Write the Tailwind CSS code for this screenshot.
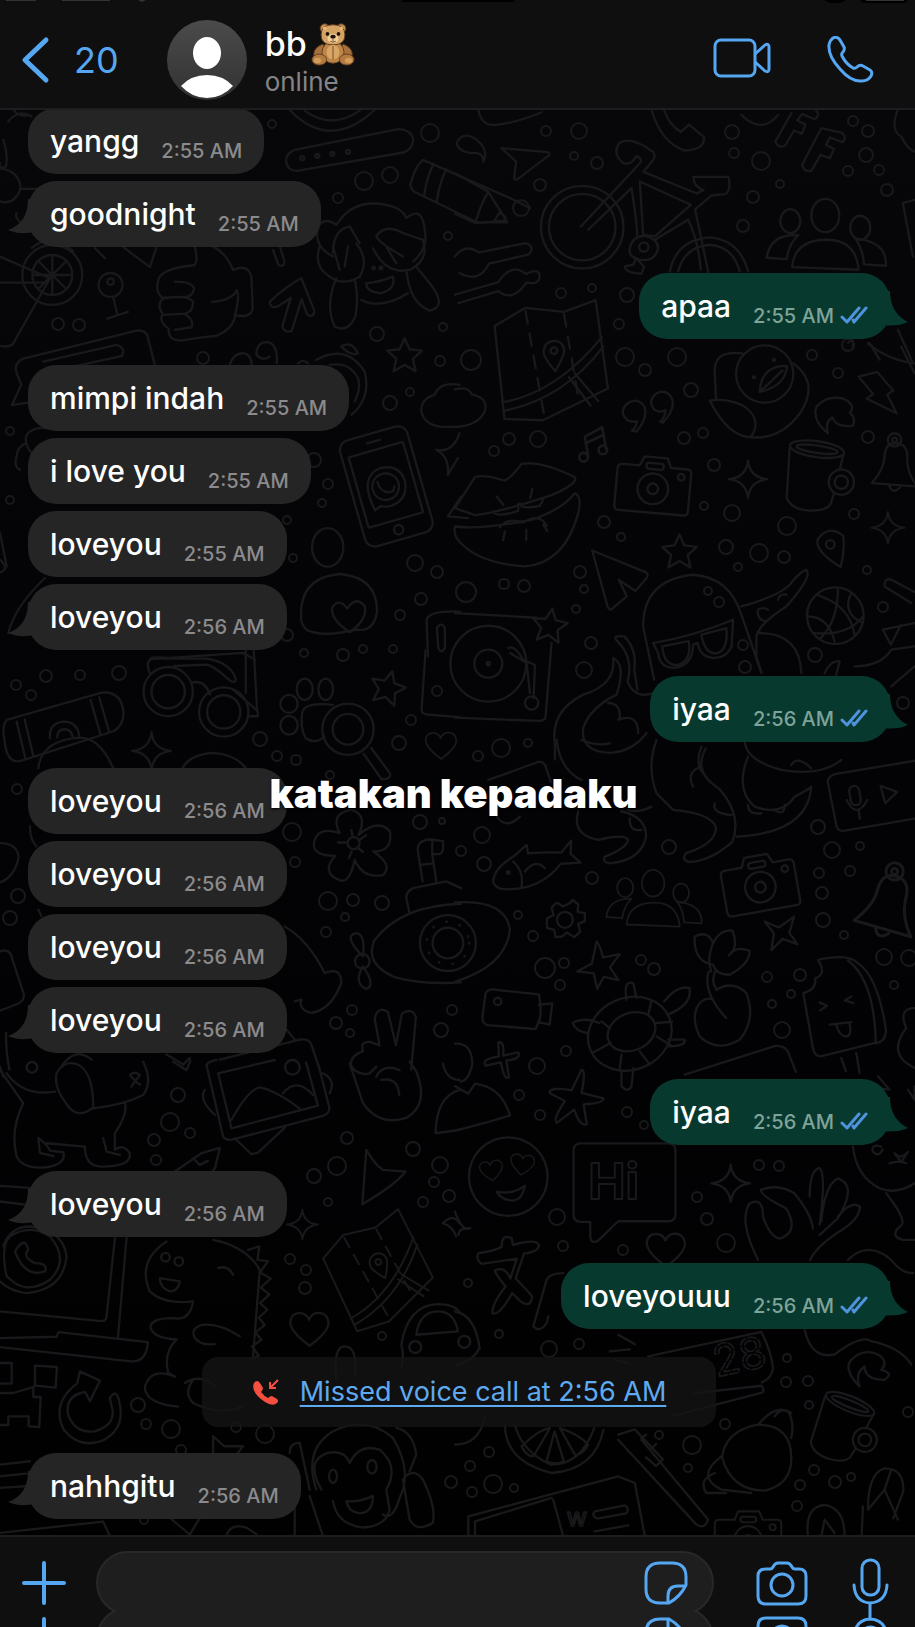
<!DOCTYPE html>
<html lang="id">
<head>
    <meta charset="UTF-8">
    <meta name="viewport" content="width=device-width, initial-scale=1.0">
    <title>bb - Chat</title>
    <script src="https://cdn.jsdelivr.net/npm/@tailwindcss/browser@4"></script>
</head>
<body class="bg-black font-['Inter','Liberation_Sans',sans-serif] text-white">
    <div class="relative flex h-screen flex-col overflow-hidden">

        <!-- Header -->
        <header class="relative flex h-[110px] shrink-0 items-center border-b-2 border-[#1d1c1e] bg-[#100f10] pt-3 pr-10 pl-5">
            <!-- bottom edge of the status bar -->
            <svg class="absolute inset-x-0 top-0 h-1 w-full" viewBox="0 0 915 4" preserveAspectRatio="none" fill="#000" aria-hidden="true">
                <path d="M402 0h112v2H402zM824 0h22l-6 3h-10zM860 0h48l-3 3h-42z"/>
                <path fill="#333" d="M6 0h30v1H6zM62 0h48v1H62zM138 0h8l-4 2zM866 0h38v1h-38z"/>
            </svg>
            <a href="#" class="flex items-center gap-[22px] text-[#55a7f2]" aria-label="Back, 20 unread chats">
                <svg class="h-12 w-8" viewBox="0 0 32 48" fill="none" stroke="currentColor" stroke-width="5" stroke-linecap="round" stroke-linejoin="round" aria-hidden="true">
                    <path d="M26 4 5 24l21 20"/>
                </svg>
                <span class="text-[36px] leading-12">20</span>
            </a>
            <svg class="ml-12 size-20 shrink-0" viewBox="0 0 80 80" role="img" aria-label="Profile photo">
                <defs>
                    <linearGradient id="avatar" x2="0" y2="1"><stop stop-color="#4b4b4b"/><stop offset="1" stop-color="#323232"/></linearGradient>
                </defs>
                <circle cx="40" cy="40" r="40" fill="url(#avatar)"/>
                <ellipse cx="40" cy="33" rx="14" ry="16" fill="#fff"/>
                <path d="M14 66Q24 55 40 55t26 11Q55 78 40 78T14 66z" fill="#fff"/>
            </svg>
            <div class="ml-[18px] flex flex-col">
                <div class="flex items-center gap-1">
                    <h1 class="text-[34px] leading-10 font-medium">bb</h1>
                    <svg class="size-11" viewBox="0 0 48 48" role="img" aria-label="Teddy bear">
                        <g stroke="#5e3b1c" stroke-width="1">
                            <path fill="#a6713c" d="M13 24Q3 28 3 35q0 5 6 3l7-6z"/>
                            <path fill="#a6713c" d="M35 24q10 4 10 11 0 5-6 3l-7-6z"/>
                            <ellipse cx="24" cy="33" rx="12" ry="12" fill="#bd8648"/>
                            <circle cx="15" cy="7" r="5" fill="#c08a4d"/><circle cx="33" cy="7" r="5" fill="#c08a4d"/>
                            <path fill="#d4a364" d="M24 3q13 0 13 11t-13 11-13-11T24 3z"/>
                            <ellipse cx="9" cy="41" rx="8" ry="6" fill="#b47b40"/><ellipse cx="39" cy="41" rx="8" ry="6" fill="#b47b40"/>
                        </g>
                        <circle cx="15" cy="7" r="2" fill="#e4b878"/><circle cx="33" cy="7" r="2" fill="#e4b878"/>
                        <ellipse cx="24" cy="33" rx="7" ry="8" fill="#d8a765"/>
                        <ellipse cx="7" cy="42" rx="4" ry="3" fill="#d29c5c"/><ellipse cx="41" cy="42" rx="4" ry="3" fill="#d29c5c"/>
                        <ellipse cx="24" cy="18" rx="6" ry="5" fill="#f1d09b"/>
                        <ellipse cx="24" cy="16" rx="3" ry="2" fill="#1e120b"/>
                        <circle cx="18" cy="13" r="2" fill="#1e120b"/><circle cx="30" cy="13" r="2" fill="#1e120b"/>
                        <path d="M24 18v3m-3 0q3 2 6 0M24 26v15" fill="none" stroke="#6b4523" stroke-width="1"/>
                    </svg>
                </div>
                <p class="text-[26px] leading-8 text-[#858587]">online</p>
            </div>
            <div class="ml-auto flex items-center gap-14 text-[#55a7f2]">
                <button type="button" aria-label="Video call">
                    <svg class="h-12 w-15" viewBox="0 0 60 48" fill="none" stroke="currentColor" stroke-width="3" stroke-linejoin="round">
                        <rect x="4" y="4" width="40" height="36" rx="6"/>
                        <path d="M44 18 54 9q4-2 4 2v22q0 4-4 2l-10-9"/>
                    </svg>
                </button>
                <button type="button" aria-label="Voice call">
                    <svg class="size-12" viewBox="0 0 48 48" fill="none" stroke="currentColor" stroke-width="3" stroke-linecap="round" stroke-linejoin="round">
                        <path d="M6 2q4-2 7 2l4 7q1 2-1 5-2 2-1 4 4 8 11 12 2 1 4-1 3-3 6-1l7 4q3 2 1 6-3 5-9 5Q24 46 13 33 1 20 2 9q1-5 4-7z"/>
                    </svg>
                </button>
            </div>
        </header>

        <!-- Messages -->
        <main class="relative flex min-h-0 flex-1 flex-col justify-end overflow-hidden bg-linear-to-b from-[#070609] to-[#010102]">
            <!-- Doodle wallpaper -->
            <svg class="absolute inset-0 h-full w-full" viewBox="0 110 915 1425" preserveAspectRatio="xMidYMin slice" fill="none" stroke="#19191b" stroke-width="7" stroke-linecap="round" stroke-linejoin="round" aria-hidden="true">
                <defs>
                    <path id="star" d="M0-50 15-17l37 4-27 25 8 37L0 30l-33 19 8-37-27-25 37-4z"/>
                    <path id="spark" d="M0-56Q5-6 58 0 6 6 0 56-6 6-58 0-5-6 0-56z"/>
                    <path id="heart" d="M0 50Q-62 5-58-24c5-30 45-32 56-4 12-30 53-26 58 4Q62 5 0 50z"/>
                    <g id="camera">
                        <path d="M-95-55h50l12-28h70l12 28h50q12 0 12 14V70q0 14-14 14H-97q-14 0-14-14V-41q0-14 16-14z"/>
                        <circle r="46" cy="12"/><circle r="16" cy="12"/><circle cx="82" cy="-30" r="10"/><rect x="-25" y="-65" width="52" height="18" rx="8"/>
                    </g>
                    <g id="people">
                        <ellipse cy="-95" rx="42" ry="50"/><ellipse cx="-105" cy="-78" rx="30" ry="36"/><ellipse cx="105" cy="-58" rx="30" ry="36"/>
                        <path d="M-100 60Q-92-20 0-22T100 68zM-116 36l-60-4q10-72 95-68-28 24-35 72zM116 52l66 4q4-72-92-82 24 34 26 78z"/>
                    </g>
                    <g id="map">
                        <path d="M-155-80-60-130 55-112 152-142 175 125-25 210-140 200z"/>
                        <path d="M-60-120-20 200M55-105 85 150" stroke-dasharray="38 30"/>
                        <path d="M-144 150Q20 130 165-30M-142 176Q40 150 168-2M60 85l60 88M78 75l66 86"/>
                        <path d="M20 65Q-15 20-12 2c4-38 60-38 62 0Q50 20 20 65z"/><circle cx="19" cy="3" r="10"/>
                    </g>
                    <g id="bell">
                        <circle cy="-75" r="20"/><circle cy="-75" r="7"/><path d="M-68 55Q-30 10-30-25q2-40 32-40 40 0 36 50 0 40 30 80zM-16 62q10 28 32 6"/>
                    </g>
                    <g id="mug">
                        <ellipse cx="0" cy="-88" rx="82" ry="24"/><ellipse cx="0" cy="-88" rx="62" ry="11"/>
                        <path d="M-82-80-70 70q20 32 72 28 55-6 62-32l5-30M76-40l5-44"/><circle cx="86" r="38"/><circle cx="86" r="20"/>
                    </g>
                </defs>

                <g transform="scale(.333)">
                    <path d="M870 330q120 125 255 0M915 332q80 60 165 0M25 365q30-40 70-15M40 330q20 25 50 15"/>
                    <path d="M885 450l310-62q40 0 46 32-4 30-30 38l-320 55q-30-2-32-30 0-22 26-33z"/>
                    <circle cx="908" cy="475" r="6"/><circle cx="953" cy="468" r="6"/><circle cx="998" cy="462" r="6"/><circle cx="1045" cy="456" r="6"/>
                    <path d="M1270 480l262 115 60 30M1270 480q-24 20-38 76 4 14 12 20l190 92h90M1302 492q-20 40-28 92M1340 508q-20 40-28 94"/>
                    <path d="M10 420q15 40 8 80-24 10-18-10M0 505q60 10 62 62-20 50-62 38M60 567h60M50 640q-10 15 30 40"/>
                    <path d="M1000 770q-60-30-45-90 20-30 55-5 50-80 150-60 50 10 60 40 50-40 56 40 10 50-35 90M1000 760q0-70 50-80l30 50M1210 770q-70-40-80-60 25-40 80-10l60 20"/>
                    <path d="M95 745q60-50 125 10M285 745l30 30M370 742l80 60 20-60"/>
                </g>

                <g transform="translate(455 0) scale(.333)">
                    <path d="M70 330q10 50 50 45 60-5 140-38M5 430q20-40 60-10 38 30 20 65 0-30-35-25-40-5-45-30zM140 445l140 12q10 5-5 15L188 538q-12 6-10-10l6-42z"/>
                    <path d="M0 520l100 56 54 86-92 8-62-28M100 576q-20 30-38 90M118 664l16-26 18 14"/>
                    <circle cx="382" cy="682" r="124"/><circle cx="382" cy="682" r="100"/>
                    <path d="M378 680 555 490q10-12-10-22-15 30-40 22-35-30-10-62 35-20 100 28 10 14-4 30l-25 30 160 65 20-10q-30-10-30-40h105q10 40-10 52l-40 4-50 42 40 190M400 690 530 565q15 90 18 150M555 545l10 160 35 5 108-95zM600 720l100-60q30 60 38 150"/>
                    <path d="M525 745q10-40 48-36 40 10 36 40-10 40-60 30-30-10-24-34zM545 775l-10 20-25 5q0 18 50 22l8-20z"/><circle cx="567" cy="742" r="14"/>
                    <path d="M645 815q20-95 120-102 90 8 115 102M670 815q20-75 95-80 70 5 90 80"/>
                    <path d="M590 330q30 100 100 122 60-2 58-40l-45-38-25 22q-35-20-50-66M860 345q60 60 110 0"/>
                    <path d="M1010 340 962 425q8 22 30 12l26-45 24 10 10-28-24-12 14-20 38 16q18-12 4-28M1100 385l-58 110q6 22 28 18l28-48 28 10 12-28-24-12 12-22 38 14q14-14-2-28z"/>
                    <use href="#people" x="1112" y="742"/>
                    <path d="M0 770q30-40 72-12l140-28q30 10 10 34l-120 28q-30 60-88 28M0 885l130-38q40-60 84-24 42-22 40 12-4 20-40 14-40 60-84 25L10 910"/>
                    <path d="M1330 330q-25 60 10 80 20 40 40 45M1345 610l35-10M1345 610l30 160"/>
                    <path d="M1180 1030q20-20 14 12M1245 1030l30 50M1330 990l45 100"/>
                </g>

                <g transform="translate(0 240) scale(.333)">
                    <circle cx="157" cy="105" r="90"/><circle cx="157" cy="105" r="60"/>
                    <path d="M157 50v110M102 105h110M118 66l78 78M118 144l78-78M0 50l150 65-110 195q-10 14-40 8M0 128h130"/>
                    <circle cx="332" cy="135" r="36"/><circle cx="332" cy="125" r="10"/><path d="M340 172l12 50M322 236l62-20"/>
                    <path d="M585 20q10 40 0 55-95 10-108 40-14 40 12 60-20 20 0 48-14 20 18 44-4 35 38 35 60-10 104-14 50-20 58-62 50 10 52-24l-4-92q-10-40-55-20-20-50-60-70M525 125q50 0 58 20-4 30-40 26l-55 2M490 175q80-10 90 12 0 30-25 34l-60 4M555 222q30 20 20 40l-50 8M636 186q60-4 75-35 10 20-6 75"/>
                    <path d="M905 115q-40 20-95 70 0 22 25 14l38-25-25 85q5 22 28 14l30-95 16 45q20 14 22-10zM820 30l16 45q20 8 18-12l-14-45"/>
                    <path d="M960 20q-20 60 30 90 40 30 90 0 30-50-10-100M1000 20l20 70M1045 20l-10 60M1120 25q40 80 110 65 60-30 40-90M1160 20l30 50M1010 115q-35 80-5 145 40 20 62-30 10-50 0-105M1220 90q10 100 70 122 50-10 10-70l-50-62M1085 180q60 30 140-20M1100 130q40-4 80-20 10 40-40 50-40-5-40-30z"/><circle cx="1122" cy="84" r="4"/><circle cx="1144" cy="84" r="4"/>
                    <path d="M50 400q-10-30 20-44l340-84q30-2 34 20l20 80M130 365l220-50q30 10 15 34l-160 34M50 400l14 34-28 62 60-10"/>
                    <path d="M690 375q10-35 40-35 25 4 26 34M770 345q0-40 35-38 30 8 26 62M770 345q20 20 40 5M895 370q15-14 30 0M950 360q90-50 145 35 20 80-40 130M990 375q60-10 85 40 10 30-10 70M1025 320q30-20 50 20-20 10-50-20z"/>
                    <use href="#star" x="1215" y="345"/>
                    <path d="M1380 435q-60-10-75 30-40 10-40 50 10 40 60 46h55M80 585q20-25 60-20M80 585q-10 30 20 60M50 650q0-30 30-40M60 690q-20-10-10-40"/>
                    <g transform="rotate(-16 1160 740)"><rect x="1055" y="575" width="210" height="330" rx="30"/><rect x="1075" y="625" width="170" height="220" rx="4"/><circle cx="1160" cy="875" r="14"/><path d="M1140 600h40"/><path d="M1108 800q-22-110 50-118 60 4 60 60-6 54-60 58-18 0-30-8z"/><circle cx="1158" cy="740" r="40"/><path d="M1138 720q0 40 38 40l8-14"/></g>
                    <path d="M1310 630q50 10 70-50M1310 630q40 20 35 75l30-50M1345 830l40-60M1345 830l60 5"/>
                    <ellipse cx="984" cy="923" rx="47" ry="58"/>
                    <path d="M905 1145q-12-130 115-142 115 10 112 115-10 60-60 52-90 20-130 8-30-4-37-33zM1050 1178q-60-40-52-75 20-30 45 4 25-40 52-8 10 40-45 79z"/>
                    <path d="M25 1180q20-80 110-165M1285 1250l-4-110q10-28 100-24M1312 1165q14-20 24 0v60q-12 20-20 0z"/>
                    <path d="M450 1260q0-10 60-5l220-15 35 20M0 880l20 100M0 960q30 30 0 38"/>
                </g>

                <g transform="translate(455 340) scale(.333)">
                    <use href="#map" transform="translate(278 30) rotate(-3)"/>
                    <path d="M0 148q40-10 50 15 50 10 40 50-20 45-90 48"/>
                    <circle cx="930" cy="102" r="86"/><circle cx="898" cy="112" r="3"/><circle cx="958" cy="60" r="3"/>
                    <path d="M915 156q5-80 82-78-4 60-82 78zM915 156l68-64M862 40q-85-10-82 55l4 85M1016 70q80 60 20 150-60 80-145 72-70 0-126-110 50-8 100 15 60 40 24 94"/>
                    <path d="M545 275q35-40 24-75-20-30-50-10-30 25 0 52 20 6 28 2-4 20-16 28zM625 248q35-40 28-68-15-35-48-20-30 25-5 50 20 10 32 0 0 20-16 36zM1120 280q-50-40-34-80 30-35 80-24 40 20 20 42 20 20 8 40-50 5-60-25-24 10-14 47zM1212 110l56-14 48 56-18 12 28 56-90-44 20-14z"/>
                    <g stroke-width="8"><path d="M400 350 390 290l52-28 12 66M392 310l52-24"/><circle cx="386" cy="352" r="13"/><circle cx="444" cy="330" r="13"/></g>
                    <path d="M0 505 60 412q20-10 90 10 20-10 50-50 60-10 160 40 10 20-70 54-150 50-230 60zM0 560q80 10 230-20 90-30 130-80 22 10 10 60-40 150-160 160Q60 670 5 595-5 575 0 560zM115 515q10 20 75-2v-20M195 490q0 20 60 8l10-20M135 562q20-30 70-14 50-30 70 10M150 575l-6 26M214 570v30M265 555l12 18M125 470l20 25M232 448l-6 26"/>
                    <use href="#camera" transform="translate(595 435) rotate(5)"/>
                    <use href="#spark" x="880" y="418"/><use href="#spark" transform="translate(1300 564) scale(.85)"/>
                    <use href="#mug" transform="translate(1075 415) rotate(8)"/><use href="#bell" transform="translate(1320 375)"/>
                    <use href="#star" x="674" y="634"/><use href="#star" transform="translate(285 856) rotate(8)"/>
                    <path d="M412 632l162 66q8 6 2 16l-34 40-50-34 24 50-48 40q-6 0-10-10zM1158 682q-80-50-68-84 30-45 76-10 5 50-8 94z"/><circle cx="1127" cy="614" r="13"/>
                    <circle cx="1142" cy="828" r="85"/><path d="M1085 765q100 30 115 120M1150 745q0 100-52 150M1060 830q60 0 80 75M1080 880q100 10 145-50M1190 760q-30 60 35 90"/>
                    <path d="M598 1020 565 860q0-140 150-155 110 8 145 120l60 175M860 800q110-30 145-65 30-40 50-45 20 20-60 110-80 50-90 90v60l16 50M915 880q120 0 125 120M970 780q5-20 25-15M935 845q-30-5-25-35 15-10 30 0"/>
                    <path d="M595 910q120-20 240-70l-4 80q-20 40-60 34-36-4-42-44l-14 4q0 60-50 70-50 4-55-44zM622 920l80-16q10 60-34 72-40 2-46-56zM740 885l75-20q6 70-32 76-34 0-43-56z"/>
                    <path d="M0 820l245 14M290 910l-18 220q0 14-20 14L0 1134"/><circle cx="100" cy="972" r="114"/><circle cx="100" cy="972" r="42"/><circle cx="100" cy="972" r="5"/><path d="M160 925q20-10 44 35l36 16-4 100M165 940l50 30 10 90"/><circle cx="230" cy="1090" r="20"/>
                    <path d="M600 1060q-60 20-82-35 20-70-30-120-20-20 20-15 40 40 30 100l10 60M475 955q10 80-90 110-100 50-85 150v45M475 955q40 20 10 110-80 40-100 100-10 70 80 75 70-5 110-60M460 1090q40 0 34 50M490 1140q60-20 60 40"/>
                    <path d="M1290 740q0-30 25-18l65 35M1290 740l80 50M1285 870l95-20M1285 870l24 45 30-60M1200 980q80 0 110-50l70-10M1310 1040l70-60M1110 1000q20-40 45-35l-10 40"/>
                    <path d="M1240 10q60 50 140 60M1340 20l40 80"/>
                </g>

                <g transform="translate(0 650) scale(.333)">
                    <path d="M20 210l285-82q60-5 66 60 0 40-30 56L60 334q-40 6-46-60-10-46 6-64zM50 215l26 110M74 208l26 110M272 150l30 105M298 142l30 105M150 265q-4-45 40-50 44 0 48 45M172 262q0-24 22-24 22 2 24 22"/>
                    <path d="M115 355q10-85 125-92 60 0 100 92"/>
                    <circle cx="505" cy="125" r="74"/><circle cx="505" cy="125" r="50"/><circle cx="672" cy="186" r="74"/><circle cx="672" cy="186" r="50"/>
                    <path d="M450 70q-16-40 10-44l160 0q70 10 88 60 0 20-25 0-30-30-60-42l-100 4M575 98q40-10 55 35M700 120q60 50 74 65v14h-30M738 0v130M762 0l10 180"/>
                    <use href="#spark" x="455" y="303"/><path d="M548 355q20-40 90-46 70 4 100 46"/>
                    <ellipse cx="915" cy="118" rx="24" ry="32"/><ellipse cx="978" cy="118" rx="22" ry="32"/><ellipse cx="868" cy="162" rx="26" ry="27"/><ellipse cx="868" cy="226" rx="26" ry="28"/><path d="M1000 165q-80-10-92 20-8 50 10 80 30 20 56-6"/>
                    <circle cx="1045" cy="238" r="77"/><circle cx="1045" cy="238" r="46"/><path d="M1115 295l56 75q4 20-25 18l-54-76"/>
                    <use href="#star" transform="translate(1165 112) rotate(15)"/><use href="#heart" transform="translate(1325 287) scale(.8)"/>
                    <path d="M1278 0l-12 180q0 14 24 14l90 8"/>
                    <path d="M1020 550q-30-60 35-70 50 14 22 75 60-50 94-10 10 60-50 60 60 40 30 70-60 14-86-45-14 70-44 62-60-24-14-74-70 0-64-40 10-50 77-28z"/><circle cx="1062" cy="580" r="18"/><path d="M1015 578h28M1055 540l4 20M1100 556l-20 14M1090 606l-16-12M1048 625l8-20"/>
                    <path d="M1255 605q-5-35 40-36l35 5q4 34-8 38l-24 2 12 80M1255 605l14 90M1262 645l40-4M1298 572v40M1220 745q0-20 20-30l100-20 45 20M1220 745l10 45"/>
                    <path d="M1384 762q-180 5-260 110-30 70 60 110 90 24 200 16"/>
                    <circle cx="1345" cy="880" r="84"/><circle cx="1345" cy="880" r="46"/><circle cx="1345" cy="880" r="64" stroke-dasharray="2 40"/>
                    <path d="M1090 920q-60-60-22-70 30 0 22 70zM1090 950q-30 50 10 68 30-10-10-68z"/><circle cx="1088" cy="935" r="22"/>
                    <path d="M0 580q50 0 56 40-10 60-56 78M0 905q30-10 36 20l36 110q0 20-20 28l-52 20M115 780l10 20M90 530q0 40 20 60M855 830q70 40 120 140 50-20 50 30-30 80-90 90-40-10-30-40l-20 5M860 1140l25 30"/>
                    <path d="M1055 1260q-10-40 35-55-10-30 20-28l30 10-15-80q10-40 40-20l24 100 18-95q30-20 42 10l-14 158"/>
                    <path d="M18 1150q0 60 10 110M660 1230l240-60q30-5 36 18l24 72M185 1250q40-60 90-20M500 1215l50 30 20-20"/>
                </g>

                <g transform="translate(455 740) scale(.333)">
                    <path d="M305 0q10 90 75 120M380 0q50 20 85 10M100 120l150-54q20-2 24 20l14 40M125 230q30 40 70 0"/>
                    <path d="M605 0q-30 80 0 160l50 50q110 10 128 50 5 50-90 80-14 20 10 26 60 0 130-60 30-80-40-160-80-50-40-120M370 215q-20 70 60 85 80-20 90 0-5 25-70 50-10 20 20 20 90-10 104-80 0-60-75-76M590 200q-40 20-70 10M870 0q0 60 110 90 120 20 180-30M880 50q-40 100 20 150 80 30 120-30 40-20 50-30-10 140-225 150M740 20q-20 50 5 80"/>
                    <path d="M715 140q-20-40 15-56M780 190q-10 30 50 35M880 195q0 30 40 25M960 210q30 20 30-15M525 235q-4 40 35 35M1010 75q20-30 60 10"/>
                    <path d="M1120 130q-4-20 24-28l240-40M1120 130l26 130q4 16 24 12l210-36"/><rect x="1186" y="138" width="30" height="58" rx="15" transform="rotate(-10 1200 166)"/><path d="M1176 180q30 60 62 0M1212 210l4 26M1278 138l50 18-36 34z"/>
                    <path d="M115 430q-4-40 60-80l40-35 4 25q60-4 100-2l30-36-2 40 30 26-60 4q-60 80-170 76-20 0-32-18zM175 365q34 30 24 80M210 395q30-40 60-10"/><circle cx="160" cy="398" r="4"/>
                    <circle cx="330" cy="540" r="24"/><path d="M310 490l14 10 20-10 10-10 16 14-2 22 22 4v24l-20 8 6 24-18 16-22-14-14 12-20 2-4-22-22-6 0-28 20-10-6-22 12-14z"/>
                    <use href="#people" transform="translate(595 506) scale(.8)"/><use href="#camera" transform="translate(915 430) rotate(-10)"/><use href="#bell" transform="translate(1300 490) rotate(12) scale(1.3)"/>
                    <path d="M930 545l42 18 46-32-14 48 24 34-44-16-34 34 8-50z"/>
                    <path d="M0 488q150-10 165 80-10 110-165 158"/>
                    <path d="M425 605q10 10 20 48l50-10-30 40 26 38-44-10-20 36-10-46-50-6 44-24zM92 760q10-14 30-10l130 14q10 60 0 80l-10 24-145-12q-18-6-14-30zM252 795l40-4-8 64-34-8"/><circle cx="128" cy="785" r="11"/>
                    <path d="M720 590q40-20 55 20 20-40 58-38 20 50-10 75 20-30 62-14 0 40-60 72-40 0-50-30-60-10-55-85zM775 610q-20 50-5 85M762 695q-20 60 52 140M785 690q-20 30 0 60 50-30 90 10 30 80-20 140-70 40-120-10-30-60 0-100 20-20 40-10"/>
                    <path d="M0 912q50-4 52 60-10 50-35 54M0 1040l40 22 20-30q80 10 105 95-60 20-165 46M130 908q20-4 14 40l46-10q10 20-36 24l8 50q-14 14-24-44l-46 10q-14-20 40-28zM380 990q14 0 0 70l66 16q0 16-60 18l10 60q-20 10-38-44l-52 40q-14-10 24-66l-46-24q0-20 66-8z"/>
                    <ellipse cx="525" cy="882" rx="128" ry="108" transform="rotate(-22 525 882)"/><ellipse cx="530" cy="876" rx="74" ry="56" transform="rotate(-22 530 876)"/>
                    <path d="M515 780q-10-60 20-50l10 44M628 785q40-50 76-40 10 50-66 80M400 880q-40-5-46-30 30-20 80 0M640 900l50 0q4 20-52 20M500 995v45q20 20 30 0l6-55M440 845l25 20M412 940l55-30M500 945l-5 40M555 935l30 40M605 890l45 28M600 850l52-4M580 825l10-42"/>
                    <path d="M1090 660q90-20 120 10 60 40 84 200 0 40-36 40l-160 40q-20 0-24-30l-28-160q40-10 36-45 36-10 8-55zM1180 662q80 60 84 250M1160 955l14 40M1205 940l10 60M1095 788l22 10-20 14M1190 770l-20 12 26 8M1125 855l65-8M1145 855q10 40 36 34 10-10 4-38"/>
                    <path d="M690 1005l270-86q36-4 44 28l20 50M1380 805q-50 0-25 60-60 80 25 120M1360 1050l20 30v-40M1270 1010l35 40-20-2"/>
                </g>

                <g transform="translate(0 1060) scale(.333)">
                    <path d="M0 30l70 100q-40 80-20 160 20 40 90 32 60-10 50-45l-40-5q-10-20-35-38l5 45 40 10M140 250l115 10q0 60 50 60 90 0 85-40-20-30-45-10v-50q40-60 30-90M310 235l10 40 40 10M170 40q20-40 60-28 50 20 50 130-50 40-80-10-40-50-30-92zM280 145q90-10 150-40 30-40 0-100M20 40q50 70 145 55M0 20l10 30"/><circle cx="96" cy="22" r="16"/><path d="M390 45q14-14 30 0l-14 18zM405 64l-10 16M405 64l16 10"/>
                    <path d="M620 15q5-10 30-15M620 15l50 215q10 14 30 8l270-70q24-10 18-30L955 10M655 40l40 165 260-68-36-130M655 40l170-40M695 180q50-90 85-98 50 10 120 64M850 100q40-50 90 5M615 90q-20 30 30 75M970 40q40 20 20 60M705 235l50 48 20-5 80-75"/><circle cx="878" cy="22" r="22"/>
                    <path d="M520 5l40 26 12-30M525 335l80-55 55-16-14 60-12 15M580 295l20 20 24-12"/>
                    <path d="M1050 10l40 120q50 70 130 44 70-40 30-140l-20-30M1050 10q20 40 60 30l20-20M1130 50q20-40 70-20M1145 60q50-10 54 45M1380 90q-70 20-72 130l72-10M1330 10q10 50 50 50"/>
                    <path d="M1100 270q30 50 50 60l68 5q-30 40-130 98zM1380 490q-20-30-50 0 30 10 40 40"/>
                    <use href="#spark" transform="translate(908 494) scale(.8)"/>
                    <use href="#map" transform="translate(1120 610) rotate(-22) scale(.86)"/>
                    <use href="#heart" x="930" y="808"/>
                    <path d="M0 378l90 6M0 425l82 10M345 535 320 770q0 14-16 14L0 755M380 535l-26 300M0 835l170-4 6-14 268 30q-4 60-50 58L0 862"/>
                    <path d="M10 560q20-60 80-60 100 10 110 90-10 100-120 110-50-5-80-35M20 650q-20-90 10-120 60-40 120 0 60 70 0 130-60 40-105 10zM45 575q30-50 40-5-20 20 20 40 40 0 30 25-60 20-90-60z"/>
                    <path d="M500 545q-90 60-50 150 40 40 130 30-10 60-60 50-70 0-68 30 10 30 78 34-40 40-25 100l20 12q-70-30-90 30 0 50 100 60M580 960q-30 40 0 70 80 40 150 10M555 970q50-30 90 10M640 540q100 20 140 90l-20 260M720 830q-60-40-110-35-40 10-25 40 20 24 60 18M480 655l60 10q-6 30-30 30-30-10-30-40zM655 625q30-10 45 20"/><circle cx="497" cy="592" r="13"/><circle cx="537" cy="605" r="13"/>
                    <path d="M745 570l34-10-6 40 32 4-24 34 32 18-30 28 26 20-28 26 22 20-26 24 18 22-28 22 18 22-28 20 20 28-22 10"/>
                    <path d="M0 910h35v62H0M105 918l66 4-4 62-62-6zM0 1000h40l60-18v30h22l-4 90-32-2v-30H25v26H0M240 935l60 28-30 62-14-28q-60 10-52 66 20 60 80 52 70-20 50-80l-4-20q20-30 28 10 20 80-46 116-70 30-120-30-40-80 40-140z"/>
                    <path d="M1205 855q20-120 110-122 50 0 65 25M1250 825q10-70 65-70 50 0 60 60zM1205 855q10 30 0 70M1010 960q-10-100 25-100 40 0 30 90"/><circle cx="1247" cy="862" r="18"/>
                    <path d="M640 1130l34 30 56 0-24 30M640 1130l0 60M0 1215l90-10M0 1250l80-8M0 1285l76-5"/>
                    <path d="M950 1290q-40-120 50-175 100-50 180 20 60 100 20 180-20 70-50 50M965 1290q-50-90 20-110 50-10 65 30 30-60 90-40 60 50 20 120l10 60q-10 50-80 54-80-10-90-80M870 1180q0-30 30-30l30 140M1190 1105q50 10 60 80l-20 50M1040 1325q40 4 80-16 0 50-40 52-34-4-40-36zM1210 1260q30-40 60 0 40 80 30 130-50 30-70-10z"/><ellipse cx="1000" cy="1250" rx="12" ry="20"/><ellipse cx="1117" cy="1222" rx="14" ry="20"/>
                    <path d="M885 1300v130M930 1310l40 120M0 1420l310-34 20 44M510 1375l60 50 30-50M680 1430q10-40 60-26l30 20"/>
                </g>

                <g transform="translate(455 1140) scale(.333)">
                    <circle cx="160" cy="110" r="118"/><use href="#heart" transform="translate(110 92) rotate(-8) scale(.6)"/><use href="#heart" transform="translate(202 74) rotate(8) scale(.62)"/><path d="M125 155q50 10 85-18-10 50-44 44-30-4-41-26z"/>
                    <path d="M378 10h262q22 0 22 22v190q0 22-22 22H490l-60 58q-24 14-24-20v-36h-28q-22 0-22-22V32q0-22 22-22z"/>
                    <text x="400" y="176" font-size="150" font-weight="700" stroke-width="6">Hi</text>
                    <path d="M0 215q20 60 46 50-40 0-34 20M70 340q60-10 70-20 0-40 30-25l4 20q70-20 78 0 0 20-45 26l-25 75q30 30 50 54-5 40-40 10l-20-20q-40 70-60 60 0-30 40-80-40-50-30-50 30-10 44 26l20-60-105 16q-20-12-11-32z"/>
                    <use href="#spark" x="828" y="130"/><use href="#heart" x="634" y="330"/>
                    <path d="M910 360q-60-120-25-170 40-20 40 40 20 60 50 66 60-20 20-90-80-40-76-56 50-20 100 10 50 60 56 106M1065 170q0-80 30-86 20 20 0 170M1100 245q10-110 50-130 60 20 0 120l-55 50M1150 230q40-50 66-30 0 40-70 80-60 40-80 80"/>
                    <path d="M1195 20q10 90 80 125 50 20 105-15M1295 160q70 90 40 100-30 30 10 40h35M1180 360q60-60 130 0 30 40 66 40M1050 570q20 90 90 74 80-60 110-40 90 20 120 70M1280 20q-30-10-26 14 20 20 30-6M1320 40q20 20 40-4l-20 30zM1305 70q30-10 50 0"/>
                    <path d="M235 560l40-140q10-20 50-20M235 560q20 20 40-10l5-20M0 515q60 10 74 110-20 40-70 50M490 585l50 28M465 635l60-6M480 660l40 10M580 650l340-74q30 60 35 110-4 30-34 42M720 760l200-22q10 10 4 20L650 830"/><circle cx="28" cy="606" r="18"/>
                    <text x="785" y="712" font-size="130" transform="rotate(-12 785 712)" stroke-width="5" stroke-dasharray="24 8">28</text>
                    <path d="M150 855q0 110 140 145 130-10 156-130M180 855q20 80 108 120 90 0 130-110M0 915q70 0 90-80M200 920q50-50 85-55-40 70-50 85-20 0-35-30zM275 965l24-90 28 90q-26 12-52 0zM315 865q60 20 85 50-20 35-40 30z"/>
                    <path d="M490 885l50-16 84 90-20 20-30-26M560 900l200 240q-10 30-35 15L490 900M560 895l14-10M590 925l14-12"/>
                    <path d="M910 855q100 0 100 100 0 80-80 98-100 0-128-100 10-80 108-98zM910 855q50-60 90-40 20 30 10 80M800 950q-80 60 0 100l90 10M780 1000q-50 20-26 60l60 0M960 830q20-30 50-10"/>
                    <use href="#mug" transform="translate(1155 870) rotate(22) scale(.95)"/><path d="M1215 740q-50-50-25-80 40-40 90-10 20 20 0 40 40 10 10 30-60 0-60-40-30 20-15 60z"/>
                    <path d="M40 1190v-60l450-120 50 20 30 160M295 1080l30 110M60 1190v-45l230-70"/><text x="335" y="1160" font-size="76" stroke-width="5">w</text><path d="M420 1115l90-18q16 10 4 24l-86 16q-20-8-8-22zM420 1175l100-18"/>
                    <use href="#camera" transform="translate(880 1190) scale(.9)"/>
                    <path d="M1060 1190q-10-90 50-94 60 10 60 94M1100 1190l10-50 30 40M1240 1110q0-110 50-124 60 0 56 70l-30 80M1240 1110l50-60 40 90M1225 1100l-4 90M1290 1050l20-60"/>
                </g>

                <!-- filler rings -->
                <g id="rings" stroke-width="2"></g>
            </svg>

            <ol id="messages" class="relative flex shrink-0 flex-col pt-1 pr-[25px] pb-4 pl-7"></ol>

            <p class="pointer-events-none absolute inset-x-0 top-[660px] pr-2 text-center text-[40px] leading-12 font-black [text-shadow:0_1px_3px_#000]">katakan kepadaku</p>
        </main>

        <!-- Composer -->
        <footer class="shrink-0 border-t-2 border-[#1d1c1e] bg-[#100f10]">
            <form id="composer" class="flex h-[74px] items-start overflow-hidden pt-[14px] pr-[25px] pl-[22px] text-[#55a7f2]">
                <button type="button" class="flex h-16 items-center" aria-label="Attach">
                    <svg class="size-11" viewBox="0 0 44 44" fill="none" stroke="currentColor" stroke-width="4" stroke-linecap="round"><path d="M22 2v40M2 22h40"/></svg>
                </button>
                <div class="ml-[30px] flex h-16 flex-1 items-center rounded-full border-2 border-[#28282a] bg-[#1e1e1f] pr-6">
                    <input type="text" class="min-w-0 flex-1 bg-transparent px-7 text-[30px] text-white outline-none" aria-label="Message">
                    <button type="button" aria-label="Stickers">
                        <svg class="size-11" viewBox="0 0 44 44" fill="none" stroke="currentColor" stroke-width="3" stroke-linejoin="round">
                            <path d="M16 2h12q14 0 14 14v8Q36 36 25 42h-9Q2 42 2 28V16Q2 2 16 2z"/><path d="M42 25h-8q-10 0-10 10v7"/>
                        </svg>
                    </button>
                </div>
                <button type="button" class="ml-10 flex h-16 items-center" aria-label="Camera">
                    <svg class="h-12 w-14" viewBox="0 0 56 48" fill="none" stroke="currentColor" stroke-width="3" stroke-linejoin="round">
                        <path d="M12 10h4q2 0 3-2 2-4 5-4h9q3 0 5 4 1 2 3 2h4q7 0 7 7v20q0 8-8 8H12q-8 0-8-8V17q0-7 8-7z"/><circle cx="28" cy="26" r="11"/>
                    </svg>
                </button>
                <button type="button" class="ml-10 flex h-16 items-center" aria-label="Voice message">
                    <svg class="h-14 w-10" viewBox="0 0 40 56" fill="none" stroke="currentColor" stroke-width="3" stroke-linecap="round">
                        <rect x="12" y="5" width="17" height="35" rx="8"/><path d="M4 30q1 17 16 18 16-1 17-18M20 48v12"/>
                    </svg>
                </button>
            </form>
            <div id="reflection" class="h-4 overflow-hidden" aria-hidden="true" inert></div>
        </footer>
    </div>

    <script>
        const messages = [
            { text: 'yangg', time: '2:55 AM' },
            { text: 'goodnight', time: '2:55 AM', last: true },
            { text: 'apaa', time: '2:55 AM', mine: true },
            { text: 'mimpi indah', time: '2:55 AM' },
            { text: 'i love you', time: '2:55 AM' },
            { text: 'loveyou', time: '2:55 AM' },
            { text: 'loveyou', time: '2:56 AM', last: true },
            { text: 'iyaa', time: '2:56 AM', mine: true },
            { text: 'loveyou', time: '2:56 AM' },
            { text: 'loveyou', time: '2:56 AM' },
            { text: 'loveyou', time: '2:56 AM' },
            { text: 'loveyou', time: '2:56 AM', last: true },
            { text: 'iyaa', time: '2:56 AM', mine: true },
            { text: 'loveyou', time: '2:56 AM', last: true },
            { text: 'loveyouuu', time: '2:56 AM', mine: true },
            { call: 'Missed voice call at 2:56 AM' },
            { text: 'nahhgitu', time: '2:56 AM', last: true }
        ];

        const tailIn = `<svg class="absolute bottom-2 -left-5 h-10 w-8" viewBox="0 0 32 40" fill="#252525" aria-hidden="true"><path d="M20 0q0 24-20 31 10 5 27 2l5-33z"/></svg>`;
        const tailOut = `<svg class="absolute -right-[18px] bottom-2 h-10 w-8" viewBox="0 0 32 40" fill="#07392f" aria-hidden="true"><path d="M14 0q0 22 18 31-10 5-28 3L0 0z"/></svg>`;
        const ticks = `<svg class="mb-1 ml-1.5 h-5 w-7" viewBox="0 0 28 20" fill="none" stroke="#4f93dc" stroke-width="3" stroke-linecap="round" stroke-linejoin="round" role="img" aria-label="Read"><path d="M2 12l5 5L19 3M13 15l1 2L26 3"/></svg>`;

        function incoming(m, gap) {
            return `<li class="relative flex items-end gap-[22px] self-start rounded-[28px] bg-[#252525] px-[22px] py-[10px] ${gap}">
                ${m.last ? tailIn : ''}
                <span class="relative text-[30px] leading-[46px] font-medium">${m.text}</span>
                <time class="relative text-[20px] leading-[26px] font-medium text-[#8b8b8d]">${m.time}</time>
            </li>`;
        }

        function outgoing(m, gap) {
            return `<li class="relative flex items-end self-end rounded-[28px] bg-[#07392f] px-[22px] py-[10px] ${gap}">
                ${tailOut}
                <span class="relative text-[30px] leading-[46px] font-medium">${m.text}</span>
                <time class="relative ml-[22px] text-[20px] leading-[26px] font-medium text-[#7fa399]">${m.time}</time>
                ${ticks}
            </li>`;
        }

        function missedCall(m) {
            return `<li class="mt-7 flex h-[70px] items-center gap-5 self-center rounded-2xl bg-[#141415]/80 px-[50px]">
                <svg class="size-7" viewBox="0 0 28 28" fill="#f5503f" aria-hidden="true">
                    <path d="M2 5q3-4 6 0l3 5q0 2-2 4 3 4 7 6 2-2 4-2l5 3q2 2 0 4-4 4-12-1Q-2 14 2 5z"/>
                    <path d="M26 2l-8 8m0-6v6h6" fill="none" stroke="#f5503f" stroke-width="2"/>
                </svg>
                <a href="#" class="text-[27px] leading-8 text-[#5eaaf0] underline decoration-2 underline-offset-4">${m.call}</a>
            </li>`;
        }

        document.getElementById('messages').innerHTML = messages.map((m, i) => {
            if (m.call) return missedCall(m);
            const prev = messages[i - 1];
            // Messages of one sender sit close together
            const grouped = prev && !prev.call && !prev.mine && !m.mine;
            const gap = i === 0 ? '' : grouped ? 'mt-[7px]' : 'mt-[26px]';
            return m.mine ? outgoing(m, gap) : incoming(m, gap);
        }).join('');

        // Rings scattered between the doodles: x, y, radius
        const rings = [
            [272,124,4],[430,133,9],[364,181,9],[390,175,8],[338,198,5],[448,236,4],[546,131,5],[579,131,8],[574,156,4],[597,163,6],[540,185,6],
            [521,208,8],[732,132,7],[734,153,5],[761,161,9],[753,197,6],[743,226,6],[780,184,4],[848,171,5],[868,131,6],[866,155,7],[879,170,5],[887,190,6],[853,121,5],
            [561,293,5],[592,288,4],[627,295,7],[619,324,5],[58,324,6],[79,325,6],[203,358,6],[377,334,7],[443,327,4],[440,361,5],[390,403,7],[410,392,4],[10,431,4],[10,500,4],
            [314,460,7],[328,484,5],[322,503,4],[287,520,4],[415,563,8],[437,572,6],[293,558,4],[421,599,6],[400,615,5],[287,635,6],[304,653,4],[363,649,4],[393,649,4],[343,655,6],
            [471,360,10],[625,357,9],[677,357,9],[645,370,6],[691,390,7],[812,355,5],[838,373,5],[848,345,6],[509,439,6],[538,439,8],[494,451,5],[684,438,6],[703,433,5],[868,437,6],
            [714,465,6],[704,506,4],[732,513,8],[604,522,6],[621,537,4],[854,514,5],[787,526,9],[726,547,7],[759,553,9],[784,557,6],[738,567,4],[580,572,6],[584,589,4],[576,609,4],
            [504,584,5],[524,586,6],[466,592,10],[591,643,6],[584,670,8],[708,591,4],[719,602,5],[883,607,5],[743,645,5],[745,667,6],[815,655,7],[867,570,4],[903,703,6],
            [16,685,5],[31,695,5],[46,676,6],[80,675,5],[119,673,7],[260,739,7],[277,756,5],[296,760,5],[411,720,5],[399,743,7],[437,691,5],[17,789,5],
            [330,775,4],[292,832,9],[295,862,5],[420,822,7],[442,821,3],[18,896,7],[10,918,7],[328,901,9],[353,900,6],[382,903,7],[345,917,4],[326,932,5],[352,1010,5],[336,1023,6],[350,1033,4],[441,1030,7],[452,1010,5],
            [478,756,5],[501,748,9],[528,743,4],[482,835,8],[461,851,5],[484,864,7],[592,878,6],[669,847,7],[818,827,7],[832,850,8],[860,846,4],[819,873,5],[850,871,5],[822,893,6],[823,920,7],[844,935,4],
            [518,915,4],[533,936,5],[545,968,10],[564,963,5],[560,985,5],[641,960,5],[654,969,6],[884,957,8],[909,958,8],[894,985,4],[767,977,5],[800,975,6],[791,994,4],[772,1004,4],[782,1030,8],
            [566,1051,5],[537,1066,8],[519,1095,5],[540,1115,5],[627,1112,5],[644,1125,4],[178,1095,7],[170,1122,9],[190,1133,5],[154,1140,6],[156,1160,5],[347,1138,6],[337,1166,9],[314,1176,7],[328,1202,4],
            [413,1149,7],[440,1165,8],[434,1182,5],[423,1202,5],[449,1196,6],[290,1259,5],[306,1270,5],[305,1288,6],[382,1336,4],[138,1405,7],[146,1424,5],[171,1429,9],[236,1427,5],[265,1434,9],[181,1450,5],[451,1482,6],
            [759,1165,5],[779,1166,5],[697,1197,5],[707,1219,6],[726,1243,9],[557,1217,8],[563,1246,5],[623,1250,5],[468,1283,4],[499,1334,4],[549,1349,8],[579,1344,5],[787,1358,4],[786,1382,5],[808,1381,5],
            [809,1405,4],[908,1412,5],[725,1424,5],[659,1435,4],[692,1445,9],[688,1468,4],[489,1452,5],[470,1466,5],[493,1484,9],[472,1492,5],[514,1488,4],[814,1470,5],[800,1485,5],[835,1482,6],[851,1477,4],[797,1506,5],[144,1520,4]
        ];
        document.getElementById('rings').innerHTML = rings
            .map(([x, y, r]) => `<circle cx="${x}" cy="${y}" r="${r}"/>`)
            .join('');

        // The composer is mirrored along its bottom edge
        const copy = document.getElementById('composer').cloneNode(true);
        copy.removeAttribute('id');
        copy.classList.add('-scale-y-100');
        document.getElementById('reflection').appendChild(copy);
    </script>
</body>
</html>
